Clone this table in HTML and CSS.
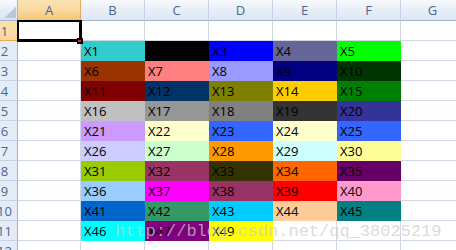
FILE: index.html
```html
<!DOCTYPE html>
<html>
<head>
<meta charset="utf-8">
<link rel="stylesheet" href="styles.css">
</head>
<body>
<div class="sheet">
  <div class="corner"></div>
  <div class="ch sel-h">A</div><div class="ch">B</div><div class="ch">C</div><div class="ch">D</div><div class="ch">E</div><div class="ch">F</div><div class="ch">G</div>

  <div class="rh sel-r">1</div>
  <div class="cell active"><span class="handle"></span></div><div class="cell"></div><div class="cell"></div><div class="cell"></div><div class="cell"></div><div class="cell"></div><div class="cell"></div>

  <div class="rh">2</div>
  <div class="cell"></div><div class="cell fill c33cccc">X1</div><div class="cell fill c000000">X2</div><div class="cell fill c0000ff">X3</div><div class="cell fill c666699">X4</div><div class="cell fill c00ff00">X5</div><div class="cell"></div>

  <div class="rh">3</div>
  <div class="cell"></div><div class="cell fill c993300">X6</div><div class="cell fill cff8080">X7</div><div class="cell fill c9999ff">X8</div><div class="cell fill c000080">X9</div><div class="cell fill c003300">X10</div><div class="cell"></div>

  <div class="rh">4</div>
  <div class="cell"></div><div class="cell fill c800000">X11</div><div class="cell fill c003366">X12</div><div class="cell fill c808000">X13</div><div class="cell fill cffcc00">X14</div><div class="cell fill c008000">X15</div><div class="cell"></div>

  <div class="rh">5</div>
  <div class="cell"></div><div class="cell fill cc0c0c0">X16</div><div class="cell fill c969696">X17</div><div class="cell fill c808080">X18</div><div class="cell fill c333333">X19</div><div class="cell fill c333399">X20</div><div class="cell"></div>

  <div class="rh">6</div>
  <div class="cell"></div><div class="cell fill ccc99ff">X21</div><div class="cell fill cffffcc">X22</div><div class="cell fill c3366ff">X23</div><div class="cell fill cffffcc">X24</div><div class="cell fill c3366ff">X25</div><div class="cell"></div>

  <div class="rh">7</div>
  <div class="cell"></div><div class="cell fill cccccff">X26</div><div class="cell fill cccffcc">X27</div><div class="cell fill cff9900">X28</div><div class="cell fill cccffff">X29</div><div class="cell fill cffff99">X30</div><div class="cell"></div>

  <div class="rh">8</div>
  <div class="cell"></div><div class="cell fill c99cc00">X31</div><div class="cell fill c993366">X32</div><div class="cell fill c333300">X33</div><div class="cell fill cff6600">X34</div><div class="cell fill c660066">X35</div><div class="cell"></div>

  <div class="rh">9</div>
  <div class="cell"></div><div class="cell fill c99ccff">X36</div><div class="cell fill cff00ff">X37</div><div class="cell fill c993366">X38</div><div class="cell fill cff0000">X39</div><div class="cell fill cff99cc">X40</div><div class="cell"></div>

  <div class="rh">10</div>
  <div class="cell"></div><div class="cell fill c0066cc">X41</div><div class="cell fill c339966">X42</div><div class="cell fill c00ccff">X43</div><div class="cell fill cffcc99">X44</div><div class="cell fill c008080">X45</div><div class="cell"></div>

  <div class="rh">11</div>
  <div class="cell"></div><div class="cell fill c00ffff">X46</div><div class="cell fill c800080">X47</div><div class="cell fill cffff00">X49</div><div class="cell"></div><div class="cell"></div><div class="cell"></div>

  <div class="rh">12</div>
  <div class="cell"></div><div class="cell"></div><div class="cell"></div><div class="cell"></div><div class="cell"></div><div class="cell"></div><div class="cell"></div>
</div>
<div class="watermark">http://blog.csdn.net/qq_38025219</div>
</body>
</html>
```
FILE: styles.css
```css
html, body {
  margin: 0;
  padding: 0;
  background: #fff;
  overflow: hidden;
  width: 456px;
  height: 250px;
}
body {
  position: relative;
  font-family: "Open Sans", "Noto Sans", sans-serif;
}
.sheet {
  display: grid;
  grid-template-columns: 18px 63px repeat(6, 64px);
  grid-template-rows: 21px repeat(12, 20px);
  width: 465px;
}
.corner {
  box-sizing: border-box;
  border-right: 1px solid #9eb6ce;
  border-bottom: 1px solid #9eb6ce;
  background:
    linear-gradient(to top left, #b7c8dc 50%, transparent 50%) right 1px bottom 2px / 12px 12px no-repeat,
    linear-gradient(#f7fafd, #e3ebf6 60%, #dae4f1);
}
.ch {
  box-sizing: border-box;
  border-right: 1px solid #c5d3e4;
  border-bottom: 1px solid #9eb6ce;
  background: linear-gradient(#f7fafd, #e6edf7 55%, #dde6f2);
  color: #4a6690;
  font-size: 13px;
  line-height: 20px;
  text-align: center;
}
.ch.sel-h {
  background: linear-gradient(#fbe3b4, #f9d99f 50%, #f3c676);
  border-right-color: #eaa95e;
  border-bottom-color: #f29536;
}
.rh {
  box-sizing: border-box;
  border-right: 1px solid #9eb6ce;
  border-bottom: 1px solid #c5d3e4;
  background: #e4ecf7;
  color: #4a6690;
  font-size: 13px;
  display: flex;
  justify-content: center;
  align-items: center;
  padding-right: 8px;
  white-space: nowrap;
}
.rh.sel-r {
  background: linear-gradient(#fbe0ac, #f8d79a);
  border-right-color: #f29536;
  border-bottom-color: #eaa95e;
}
.cell {
  box-sizing: border-box;
  border-right: 1px solid #d0d7e5;
  border-bottom: 1px solid #d0d7e5;
  font-size: 13px;
  line-height: 17px;
  padding: 2px 0 0 3px;
  color: #000;
  white-space: nowrap;
  overflow: hidden;
}
.cell.fill { border-color: transparent; }
.cell.active {
  position: relative;
  overflow: visible;
  z-index: 2;
}
.cell.active::before {
  content: "";
  position: absolute;
  left: -1px;
  top: -1px;
  right: -2px;
  bottom: -2px;
  border-style: solid;
  border-color: #000;
  border-width: 2px 3px 3px 2px;
}
.handle {
  position: absolute;
  right: -3px;
  bottom: -4px;
  width: 6px;
  height: 6px;
  background: #000;
  box-sizing: border-box;
  border: 1px solid #000;
  border-right-width: 2px;
  border-bottom-width: 2px;
}
.handle::after {
  content: "";
  position: absolute;
  left: 0;
  top: 1px;
  width: 3px;
  height: 2px;
  background: #e02a20;
}

.c33cccc { background: #33cccc; }
.c000000 { background: #000000; }
.c0000ff { background: #0000ff; }
.c666699 { background: #666699; }
.c00ff00 { background: #00ff00; }
.c993300 { background: #993300; }
.cff8080 { background: #ff8080; }
.c9999ff { background: #9999ff; }
.c000080 { background: #000080; }
.c003300 { background: #003300; }
.c800000 { background: #800000; }
.c003366 { background: #003366; }
.c808000 { background: #808000; }
.cffcc00 { background: #ffcc00; }
.c008000 { background: #008000; }
.cc0c0c0 { background: #c0c0c0; }
.c969696 { background: #969696; }
.c808080 { background: #808080; }
.c333333 { background: #333333; }
.c333399 { background: #333399; }
.ccc99ff { background: #cc99ff; }
.cffffcc { background: #ffffcc; }
.c3366ff { background: #3366ff; }
.cccccff { background: #ccccff; }
.cccffcc { background: #ccffcc; }
.cff9900 { background: #ff9900; }
.cccffff { background: #ccffff; }
.cffff99 { background: #ffff99; }
.c99cc00 { background: #99cc00; }
.c993366 { background: #993366; }
.c333300 { background: #333300; }
.cff6600 { background: #ff6600; }
.c660066 { background: #660066; }
.c99ccff { background: #99ccff; }
.cff00ff { background: #ff00ff; }
.cff0000 { background: #ff0000; }
.cff99cc { background: #ff99cc; }
.c0066cc { background: #0066cc; }
.c339966 { background: #339966; }
.c00ccff { background: #00ccff; }
.cffcc99 { background: #ffcc99; }
.c008080 { background: #008080; }
.c00ffff { background: #00ffff; }
.c800080 { background: #800080; }
.cffff00 { background: #ffff00; }

.watermark {
  position: absolute;
  left: 115px;
  top: 223px;
  font-family: "Liberation Mono", "DejaVu Sans Mono", monospace;
  font-size: 17px;
  line-height: 17px;
  color: rgba(205, 205, 205, 0.72);
  white-space: nowrap;
  pointer-events: none;
  z-index: 5;
}
```
